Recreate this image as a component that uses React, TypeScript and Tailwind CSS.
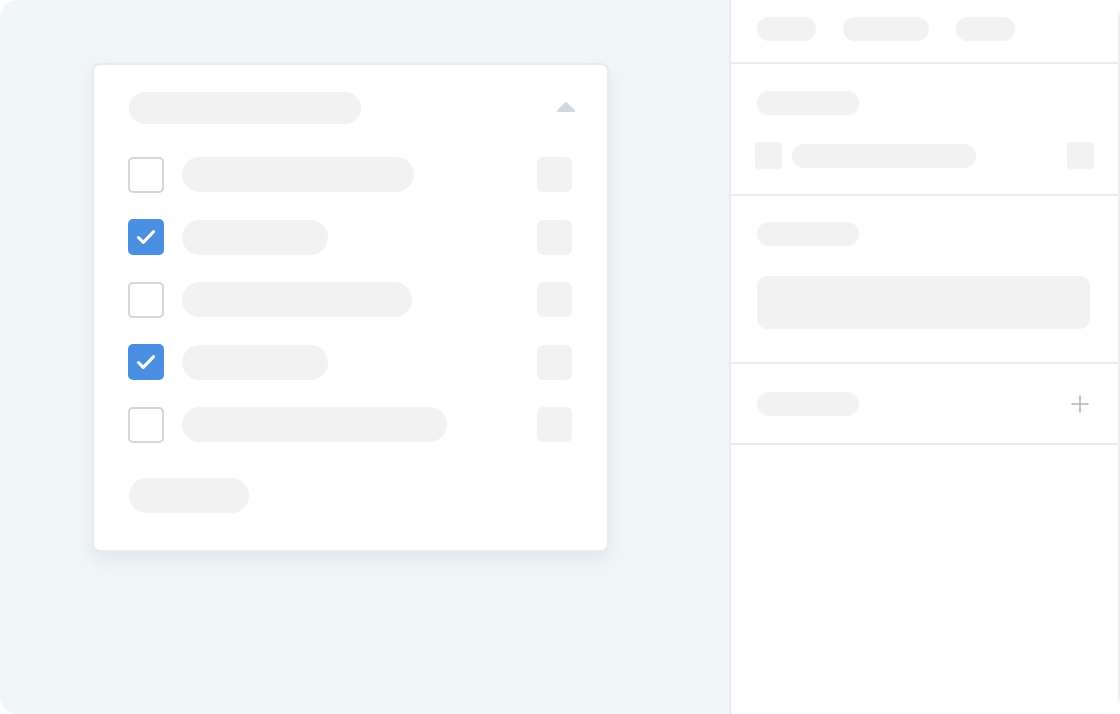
import React from "react";

const Pill = ({ w, h = "h-[35px]" }: { w: string; h?: string }) => (
  <div className={`${h} rounded-full bg-[#f2f2f2]`} style={{ width: w }} />
);

const Check = ({ checked }: { checked: boolean }) =>
  checked ? (
    <div className="w-[36px] h-[36px] rounded-[5px] bg-[#4a8fe2] flex items-center justify-center shrink-0">
      <svg width="26" height="26" viewBox="0 0 24 24" fill="none" stroke="white" strokeWidth="2.8" strokeLinecap="round" strokeLinejoin="round">
        <path d="M5 12.5l4.5 4.5L19 7" />
      </svg>
    </div>
  ) : (
    <div className="w-[36px] h-[36px] rounded-[5px] border-2 border-[#d6d6da] bg-white shrink-0" />
  );

const rows = [
  { c: false, w: "232px" },
  { c: true, w: "146px" },
  { c: false, w: "230px" },
  { c: true, w: "146px" },
  { c: false, w: "265px" },
];

export default function App() {
  return (
    <div className="w-[1120px] h-[714px] bg-white">
      <div className="w-full h-full rounded-[18px] overflow-hidden bg-[#f1f6f9] flex">
        <div className="w-[729px] shrink-0 pt-[63px] pl-[92px]">
          <div className="w-[517px] h-[489px] bg-white rounded-[8px] border-2 border-[#e6ebef] shadow-[0_8px_16px_rgba(170,185,200,0.25)] pt-[26px] pl-[35px] pr-[35px]">
            <div className="flex items-center justify-between h-[34px]">
              <Pill w="232px" h="h-[32px]" />
              <svg width="20" height="12" viewBox="0 0 20 12" className="mr-[-4px] mt-[-3px]">
                <path d="M10 2 L18 10 L2 10 Z" fill="#d2d7de" stroke="#d2d7de" strokeWidth="2" strokeLinejoin="round" />
              </svg>
            </div>
            <div className="mt-[32px] flex flex-col gap-[27.5px]">
              {rows.map((r, i) => (
                <div key={i} className="flex items-center h-[35px] ml-[-1px]">
                  <Check checked={r.c} />
                  <div className="ml-[18px]">
                    <Pill w={r.w} />
                  </div>
                  <div className="ml-auto w-[35px] h-[35px] rounded-[6px] bg-[#f2f2f2]" />
                </div>
              ))}
            </div>
            <div className="mt-[36px]">
              <Pill w="120px" />
            </div>
          </div>
        </div>
        <div className="flex-1 bg-white border-l-2 border-[#e9eaec] border-r-2 border-r-[#eceef0] flex flex-col">
          <div className="h-[64px] border-b-2 border-[#e9ecee] flex items-center gap-[27px] pl-[26px] pb-[4px]">
            <Pill w="59px" h="h-[24px]" />
            <Pill w="86px" h="h-[24px]" />
            <Pill w="59px" h="h-[24px]" />
          </div>
          <div className="h-[132px] border-b-2 border-[#e9ecee] pl-[26px] pr-[24px] pt-[27px]">
            <Pill w="102px" h="h-[24px]" />
            <div className="flex items-center mt-[27px] ml-[-2px]">
              <div className="w-[27px] h-[27px] rounded-[4px] bg-[#f2f2f2]" />
              <div className="ml-[10px]">
                <Pill w="184px" h="h-[24px]" />
              </div>
              <div className="ml-auto w-[27px] h-[27px] rounded-[4px] bg-[#f2f2f2]" />
            </div>
          </div>
          <div className="h-[168px] border-b-2 border-[#e9ecee] pl-[26px] pr-[28px] pt-[26px]">
            <Pill w="102px" h="h-[24px]" />
            <div className="mt-[30px] h-[53px] rounded-[10px] bg-[#f2f2f2]" />
          </div>
          <div className="h-[81px] border-b-2 border-[#e9ecee] pl-[26px] pr-[28px] flex items-center justify-between">
            <Pill w="102px" h="h-[24px]" />
            <svg width="20" height="20" viewBox="0 0 20 20" stroke="#b4b6bc" strokeWidth="1.6" strokeLinecap="round">
              <path d="M10 2v16M2 10h16" />
            </svg>
          </div>
          <div className="flex-1" />
        </div>
      </div>
    </div>
  );
}
